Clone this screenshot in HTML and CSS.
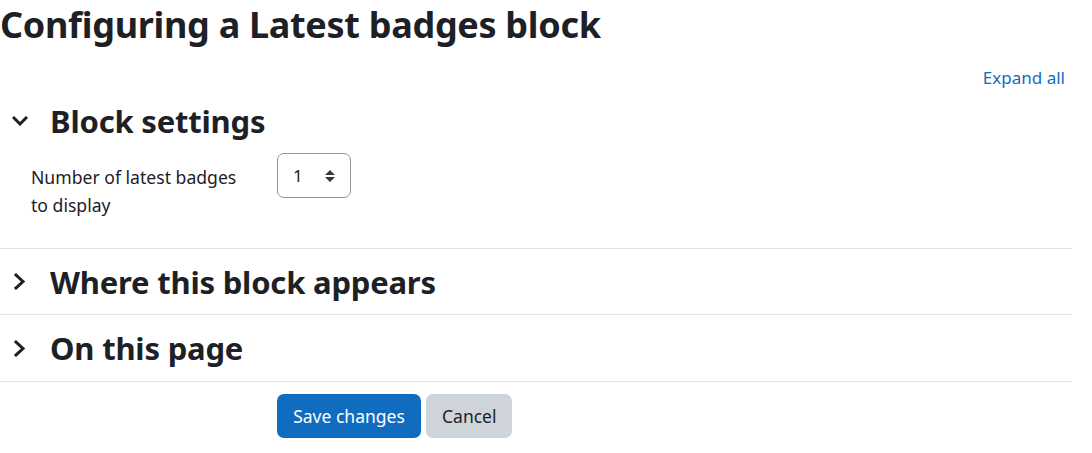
FILE: index.html
```html
<!DOCTYPE html>
<html>
<head>
<meta charset="utf-8">
<link rel="stylesheet" href="styles.css">
</head>
<body>
<div class="page">
  <h1 class="page-title">Configuring a Latest badges block</h1>
  <div class="collapse-all"><a href="#">Expand all</a></div>

  <section class="section">
    <div class="section-head">
      <span class="chev">
        <svg width="16" height="10" viewBox="0 0 16 10"><path d="M2 2 L8 8 L14 2" fill="none" stroke="#1d2125" stroke-width="3" stroke-linecap="square"/></svg>
      </span>
      <h3 class="section-title">Block settings</h3>
    </div>
    <div class="form-row">
      <label class="form-label">Number of latest badges to display</label>
      <div class="select">
        <span class="select-value">1</span>
        <svg class="select-arrows" width="10" height="12" viewBox="0 0 10 12"><path d="M5 0 L10 5 H0 Z M5 12 L10 7 H0 Z" fill="#343a40"/></svg>
      </div>
    </div>
  </section>

  <section class="section collapsed">
    <div class="section-head">
      <span class="chev">
        <svg width="12" height="17" viewBox="0 0 12 17"><path d="M2 2 L9 8.5 L2 15" fill="none" stroke="#1d2125" stroke-width="3" stroke-linecap="square"/></svg>
      </span>
      <h3 class="section-title">Where this block appears</h3>
    </div>
  </section>

  <section class="section collapsed">
    <div class="section-head">
      <span class="chev">
        <svg width="12" height="17" viewBox="0 0 12 17"><path d="M2 2 L9 8.5 L2 15" fill="none" stroke="#1d2125" stroke-width="3" stroke-linecap="square"/></svg>
      </span>
      <h3 class="section-title">On this page</h3>
    </div>
  </section>

  <div class="buttons">
    <button class="btn btn-primary">Save changes</button>
    <button class="btn btn-secondary">Cancel</button>
  </div>
</div>
</body>
</html>
```

FILE: styles.css
```css
html, body {
  margin: 0;
  padding: 0;
  background: #fff;
}
body {
  font-family: "Noto Sans", "Open Sans", sans-serif;
  color: #1d2125;
}
.page {
  width: 1072px;
}
.page-title {
  margin: 0;
  padding-top: 0;
  font-size: 36px;
  font-weight: 700;
  line-height: 49px;
  letter-spacing: -0.3px;
}
.collapse-all {
  display: flex;
  justify-content: flex-end;
  padding-right: 7px;
  margin-top: 17px;
  margin-bottom: 8px;
  font-size: 17px;
  line-height: 24px;
}
.collapse-all a {
  color: #0f6cbf;
  text-decoration: none;
}
.section {
  border-bottom: 1px solid #dee2e6;
}
.section-head {
  display: flex;
  align-items: center;
  height: 46px;
}
.collapsed .section-head {
  height: 65px;
}
.collapsed + .collapsed .section-head {
  height: 66px;
}
.chev {
  width: 50px;
  display: flex;
  justify-content: center;
  padding-right: 10px;
  box-sizing: border-box;
}
.section-title {
  margin: 0;
  font-size: 31px;
  font-weight: 700;
  letter-spacing: -0.2px;
}
.form-row {
  display: flex;
  align-items: flex-start;
  padding: 9px 0 29px 31px;
}
.form-label {
  width: 215px;
  margin-right: 31px;
  font-size: 17.6px;
  line-height: 28px;
  padding-top: 10px;
}
.select {
  width: 74px;
  height: 45px;
  box-sizing: border-box;
  border: 1px solid #8f959e;
  border-radius: 7px;
  display: flex;
  align-items: center;
  justify-content: space-between;
  padding: 0 15px 0 15px;
  font-size: 17px;
  color: #1d2125;
}
.buttons {
  display: flex;
  gap: 5px;
  padding: 12px 0 0 277px;
}
.btn {
  font-family: "Noto Sans", "Open Sans", sans-serif;
  font-size: 17.5px;
  height: 44px;
  border: none;
  border-radius: 7px;
  padding: 0 16px;
}
.btn-primary {
  background: #0f6cbf;
  color: #fff;
  width: 144px;
}
.btn-secondary {
  background: #ced4da;
  color: #1d2125;
  width: 86px;
}
```
